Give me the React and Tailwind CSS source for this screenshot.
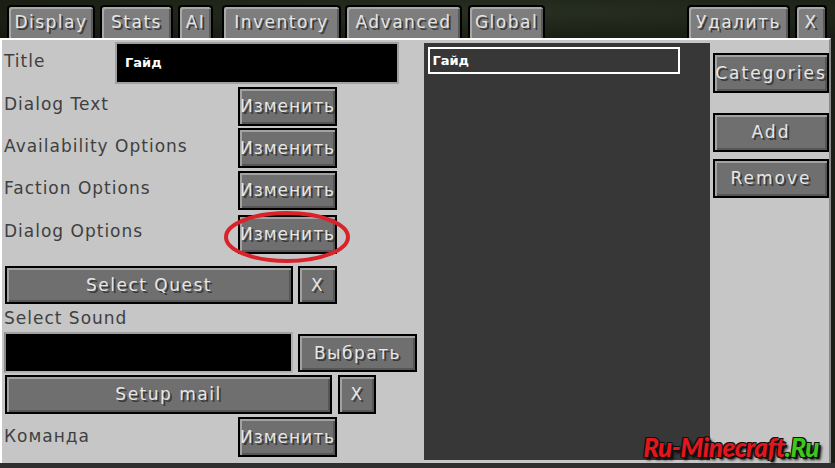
import React from "react";

const FONT = "font-['DejaVu_Sans',sans-serif]";

function Btn({ children, className = "", textClass = "tracking-[1.5px]" }) {
  return (
    <div
      className={
        "border-2 border-black bg-[#6f6f6f] shadow-[inset_2px_2px_0_#a2a2a2,inset_-2px_-2px_0_#565656] flex items-center justify-center text-[#e6e6e6] [text-shadow:2px_2px_0_#3a3a3a] text-[17px] leading-none shrink-0 " +
        className
      }
    >
      <span className={textClass}>{children}</span>
    </div>
  );
}

function Tab({ children, className = "" }) {
  return (
    <div
      className={
        "h-[33px] border-2 border-b-0 border-black rounded-t-[4px] bg-[#7d7d7d] shadow-[inset_2px_2px_0_#a8a8a8,inset_-2px_0_0_#5a5a5a] flex items-center justify-center text-[#e4e4e4] [text-shadow:2px_2px_0_#3a3a3a] text-[17px] tracking-[1.5px] leading-none shrink-0 " +
        className
      }
    >
      {children}
    </div>
  );
}

function Label({ children, className = "" }) {
  return (
    <div className={"text-[#3f3f3f] text-[17px] tracking-[1px] leading-none pl-[2px] " + className}>
      {children}
    </div>
  );
}

export default function App() {
  return (
    <div className={"w-[835px] h-[468px] bg-[#1a1e16] flex flex-col overflow-hidden relative " + FONT}>
      {/* Tabs */}
      <div className="h-[38px] flex items-end pl-[7px] pr-[8px] bg-[radial-gradient(ellipse_at_60%_30%,#283022,#15180f)]">
        <Tab className="w-[88px]">Display</Tab>
        <Tab className="w-[73px] ml-[5px]">Stats</Tab>
        <Tab className="w-[35px] ml-[5px]">AI</Tab>
        <Tab className="w-[119px] ml-[9px]">Inventory</Tab>
        <Tab className="w-[117px] ml-[4px]">Advanced</Tab>
        <Tab className="w-[77px] ml-[6px]">Global</Tab>
        <div className="flex-1" />
        <Tab className="w-[103px]">Удалить</Tab>
        <Tab className="w-[32px] ml-[5px]">X</Tab>
      </div>

      {/* Panel */}
      <div className="w-[831px] h-[425px] bg-[#c6c6c6] border-t-2 border-l-2 border-white border-r-2 border-r-[#8a8a8a] flex">
        {/* Left column */}
        <div className="w-[423px] flex flex-col relative">
          {/* Title */}
          <div className="flex mt-[2px] h-[42px]">
            <Label className="w-[113px] pt-[11px]">Title</Label>
            <div className="w-[284px] h-[42px] bg-black border-2 border-[#a0a0a0] flex items-center pl-[8px] text-white font-bold text-[13px]">
              Гайд
            </div>
          </div>
          {/* Dialog Text */}
          <div className="flex items-center mt-[3px] h-[39px]">
            <Label className="w-[236px] mb-[4px]">Dialog Text</Label>
            <Btn className="w-[99px] h-[39px]" textClass="tracking-[1px]">Изменить</Btn>
          </div>
          <div className="flex items-center mt-[2px] h-[40px]">
            <Label className="w-[236px] mb-[4px]">Availability Options</Label>
            <Btn className="w-[99px] h-[40px]" textClass="tracking-[1px]">Изменить</Btn>
          </div>
          <div className="flex items-center mt-[3px] h-[39px]">
            <Label className="w-[236px] mb-[4px]">Faction Options</Label>
            <Btn className="w-[99px] h-[39px]" textClass="tracking-[1px]">Изменить</Btn>
          </div>
          <div className="flex items-center mt-[5px] h-[39px]">
            <Label className="w-[236px] mb-[6px]">Dialog Options</Label>
            <Btn className="w-[99px] h-[39px]" textClass="tracking-[1px]">Изменить</Btn>
          </div>
          {/* Select Quest */}
          <div className="flex mt-[12px] h-[38px] pl-[3px]">
            <Btn className="w-[288px] h-[38px]">Select Quest</Btn>
            <Btn className="w-[39px] h-[38px] ml-[5px]">X</Btn>
          </div>
          {/* Select Sound */}
          <div className="h-[28px] flex items-center">
            <Label>Select Sound</Label>
          </div>
          <div className="flex h-[41px] pl-[2px]">
            <div className="w-[289px] h-[41px] bg-black border-2 border-t-[#a0a0a0] border-l-[#8a8a8a] border-r-[#b0b0b0] border-b-[#b0b0b0]" />
            <Btn className="w-[119px] h-[38px] ml-[5px] mt-[2px]">Выбрать</Btn>
          </div>
          {/* Setup mail */}
          <div className="flex mt-[2px] h-[39px] pl-[3px]">
            <Btn className="w-[327px] h-[39px]">Setup mail</Btn>
            <Btn className="w-[38px] h-[39px] ml-[6px]">X</Btn>
          </div>
          {/* Команда */}
          <div className="flex items-center mt-[3px] h-[40px]">
            <Label className="w-[236px] mt-[-2px]">Команда</Label>
            <Btn className="w-[99px] h-[40px]" textClass="tracking-[1px]">Изменить</Btn>
          </div>

          {/* red ellipse annotation */}
          <svg className="absolute left-[221px] top-[170px] pointer-events-none" width="128" height="54" viewBox="0 0 128 54">
            <ellipse cx="64" cy="27" rx="61" ry="24" fill="none" stroke="#d8232a" strokeWidth="4" />
          </svg>
        </div>

        {/* List */}
        <div className="w-[286px] h-[417px] mt-[3px] bg-[#373737] pt-[4px] pl-[4px]">
          <div className="w-[252px] h-[27px] border-2 border-white flex items-center pl-[2px] text-white font-bold text-[13px] leading-none">
            Гайд
          </div>
        </div>

        {/* Right column */}
        <div className="w-[116px] ml-[3px] flex flex-col">
          <Btn className="w-[116px] h-[40px] mt-[13px]" textClass="tracking-[2px]">Categories</Btn>
          <Btn className="w-[116px] h-[39px] mt-[20px]" textClass="tracking-[2px]">Add</Btn>
          <Btn className="w-[116px] h-[39px] mt-[7px]" textClass="tracking-[2px]">Remove</Btn>
        </div>
      </div>
      <div className="flex-1 bg-[#2f2f2f]" />

      {/* watermark */}
      <div className="absolute right-[16px] bottom-[8px] font-['Lato','Open_Sans',sans-serif] font-black italic text-[26px] leading-none tracking-[-0.5px] [text-shadow:2px_2px_0_#111,-1px_-1px_0_#111,1px_-1px_0_#111,-1px_1px_0_#111,3px_3px_3px_#000]">
        <span className="text-[#e3151d]">Ru-Minecraft</span>
        <span className="text-[#3dc61c]">.Ru</span>
      </div>
    </div>
  );
}
